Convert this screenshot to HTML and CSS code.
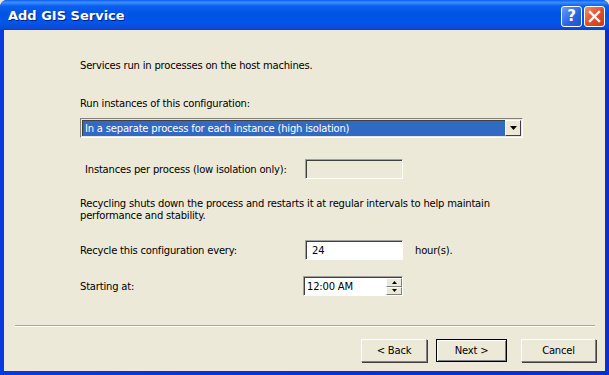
FILE: index.html
```
<!DOCTYPE html>
<html lang="en">
<head>
    <meta charset="UTF-8">
    <title>Add GIS Service</title>
    <link rel="stylesheet" href="styles.css">
</head>
<body>
    <div class="window">
        <div class="titlebar">
            <span class="title">Add GIS Service</span>
            <div class="title-buttons">
                <div class="tbtn help">?</div>
                <div class="tbtn close">
                    <svg width="13" height="13" viewBox="0 0 13 13"><path d="M2 2 L11 11 M11 2 L2 11" stroke="#fff" stroke-width="2.4" stroke-linecap="square"/></svg>
                </div>
            </div>
        </div>
        <div class="client">
            <div class="content">
                <p class="intro">Services run in processes on the host machines.</p>

                <p class="label-run">Run instances of this configuration:</p>
                <div class="combo">
                    <div class="combo-value">In a separate process for each instance (high isolation)</div>
                    <div class="combo-btn">
                        <svg width="7" height="4" viewBox="0 0 7 4"><path d="M0 0 H7 L3.5 4 Z" fill="#000"/></svg>
                    </div>
                </div>

                <div class="row row-instances">
                    <span class="row-label indent">Instances per process (low isolation only):</span>
                    <div class="field disabled"></div>
                </div>

                <p class="note">Recycling shuts down the process and restarts it at regular intervals to help maintain performance and stability.</p>

                <div class="row row-recycle">
                    <span class="row-label">Recycle this configuration every:</span>
                    <div class="field">24</div>
                    <span class="unit">hour(s).</span>
                </div>

                <div class="row row-start">
                    <span class="row-label">Starting at:</span>
                    <div class="timepick">
                        <span class="time">12:00 AM</span>
                        <div class="spin">
                            <div class="spin-btn"><svg width="5" height="3" viewBox="0 0 5 3"><path d="M0 3 H5 L2.5 0 Z" fill="#000"/></svg></div>
                            <div class="spin-btn"><svg width="5" height="3" viewBox="0 0 5 3"><path d="M0 0 H5 L2.5 3 Z" fill="#000"/></svg></div>
                        </div>
                    </div>
                </div>
            </div>
            <div class="separator"></div>
            <div class="buttons">
                <button class="btn">&lt; Back</button>
                <button class="btn default">Next &gt;</button>
                <button class="btn cancel">Cancel</button>
            </div>
        </div>
    </div>
</body>
</html>
```

FILE: styles.css
```
body {
    margin: 0;
    padding: 0;
    font-family: 'DejaVu Sans', Verdana, sans-serif;
    font-size: 10px;
    letter-spacing: -0.2px;
    color: #000;
    background: #ECE9D8;
}
.window {
    width: 609px;
    height: 375px;
    box-sizing: border-box;
    display: flex;
    flex-direction: column;
    padding: 0 4px 4px 4px;
    border-radius: 7px 7px 0 0;
    background: linear-gradient(to right, #0A3ADB, #0831D9 50%, #0A2FCE);
}
.titlebar {
    height: 30px;
    margin: 0 -4px;
    padding: 0 4px 0 8px;
    display: flex;
    align-items: center;
    justify-content: space-between;
    border-radius: 7px 7px 0 0;
    background: linear-gradient(to bottom, #0A5FEF 0%, #3D8EFD 8%, #0A60F0 20%, #0054E3 45%, #0055EA 75%, #0C4DD8 92%, #0842C8 100%);
}
.title {
    color: #fff;
    font-weight: bold;
    font-size: 13px;
    letter-spacing: 0;
    text-shadow: 1px 1px 0 #0A1E80;
    margin-top: 1px;
}
.title-buttons {
    display: flex;
    gap: 2px;
    margin-top: 2px;
}
.tbtn {
    width: 21px;
    height: 21px;
    box-sizing: border-box;
    border: 1px solid #fff;
    border-radius: 3px;
    display: flex;
    align-items: center;
    justify-content: center;
    color: #fff;
    font-weight: bold;
    font-size: 15px;
    letter-spacing: 0;
}
.help {
    background: linear-gradient(135deg, #6C9CF6, #2863E0 60%, #1E50D0);
}
.close {
    background: linear-gradient(135deg, #F0906C, #E0502C 50%, #C83C18);
}
.client {
    flex: 1;
    background: #ECE9D8;
    display: flex;
    flex-direction: column;
}
.content {
    padding: 0 0 0 76px;
    flex: 1;
}
p {
    margin: 0;
}
.intro {
    margin-top: 29px;
    line-height: 14px;
}
.label-run {
    margin-top: 24px;
    line-height: 14px;
}
.combo {
    margin-top: 7px;
    width: 443px;
    height: 20px;
    box-sizing: border-box;
    border-top: 1px solid #808080;
    border-left: 1px solid #808080;
    border-right: 1px solid #fff;
    border-bottom: 1px solid #fff;
    display: flex;
}
.combo-value {
    flex: 1;
    margin: 1px 0 1px 1px;
    border-top: 1px solid #404040;
    border-left: 1px solid #404040;
    background: #316AC5;
    color: #fff;
    line-height: 15px;
    padding-left: 2px;
}
.combo-btn {
    width: 16px;
    margin: 1px 1px 1px 0;
    box-sizing: border-box;
    background: #ECE9D8;
    border-top: 1px solid #fff;
    border-left: 1px solid #fff;
    border-right: 1px solid #404040;
    border-bottom: 1px solid #404040;
    display: flex;
    align-items: center;
    justify-content: center;
}
.row {
    display: flex;
    align-items: center;
}
.row-label {
    width: 225px;
}
.indent {
    padding-left: 5px;
    width: 220px;
}
.row-instances {
    margin-top: 21px;
}
.field {
    width: 98px;
    height: 20px;
    box-sizing: border-box;
    background: #fff;
    border: 1px solid;
    border-color: #A0A0A0 #fff #fff #A0A0A0;
    box-shadow: inset 1px 1px 0 #404040;
    padding: 3px 0 0 6px;
    line-height: 13px;
}
.disabled {
    background: #ECE9D8;
}
.note {
    margin-top: 19px;
    width: 440px;
    line-height: 12px;
}
.row-recycle {
    margin-top: 18px;
}
.unit {
    margin-left: 12px;
}
.row-start {
    margin-top: 16px;
}
.timepick {
    margin-left: -2px;
    width: 100px;
    height: 20px;
    box-sizing: border-box;
    background: #fff;
    border: 1px solid;
    border-color: #A0A0A0 #fff #fff #A0A0A0;
    box-shadow: inset 1px 1px 0 #404040;
    display: flex;
}
.time {
    flex: 1;
    padding: 3px 0 0 3px;
    line-height: 13px;
}
.spin {
    width: 16px;
    display: flex;
    flex-direction: column;
    padding: 1px 0 0 0;
}
.spin-btn {
    flex: 1;
    background: #ECE9D8;
    border-top: 1px solid #fff;
    border-left: 1px solid #fff;
    border-right: 1px solid #808080;
    border-bottom: 1px solid #808080;
    display: flex;
    align-items: center;
    justify-content: center;
}
.separator {
    margin: 0 10px 0 11px;
    height: 1px;
    background: #ACA899;
    border-bottom: 1px solid #fff;
}
.buttons {
    display: flex;
    justify-content: flex-end;
    padding: 12px 9px 9px 0;
    height: 23px;
}
.btn {
    font-family: 'DejaVu Sans', Verdana, sans-serif;
    font-size: 10px;
    letter-spacing: -0.2px;
    width: 66px;
    height: 23px;
    margin-left: 8px;
    background: #ECE9D8;
    color: #000;
    border: 1px solid;
    border-color: #fff #808080 #808080 #fff;
    box-shadow: 1px 1px 0 #404040;
    padding: 0;
}
.default {
    width: 71px;
    margin-left: 9px;
    border: 1px solid #000;
    box-shadow: inset 1px 1px 0 #fff, inset -1px -1px 0 #808080;
}
.cancel {
    width: 75px;
    margin-left: 14px;
}
```
